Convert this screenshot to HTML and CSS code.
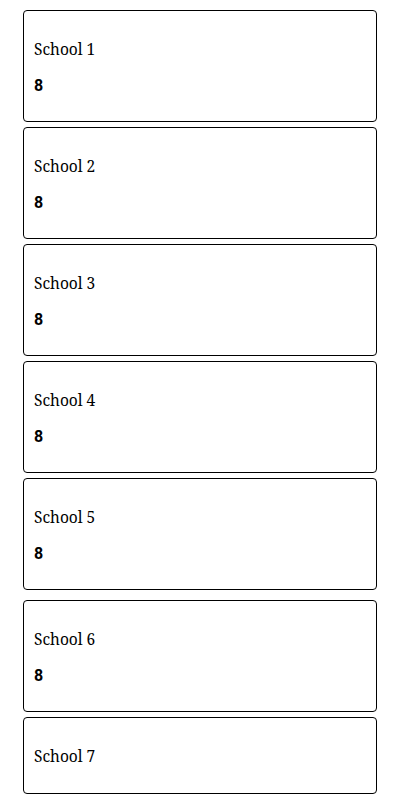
FILE: index.html
```html
<!DOCTYPE html>
<html lang="en">
<head>
<meta charset="utf-8">
<title>Schools</title>
<link rel="stylesheet" href="styles.css">
</head>
<body>
<main class="list">
  <section class="card">
    <p class="name">School 1</p>
    <p class="value">8</p>
  </section>
  <section class="card">
    <p class="name">School 2</p>
    <p class="value">8</p>
  </section>
  <section class="card">
    <p class="name">School 3</p>
    <p class="value">8</p>
  </section>
  <section class="card">
    <p class="name">School 4</p>
    <p class="value">8</p>
  </section>
  <section class="card">
    <p class="name">School 5</p>
    <p class="value">8</p>
  </section>
  <section class="card card-spaced">
    <p class="name">School 6</p>
    <p class="value">8</p>
  </section>
  <section class="card">
    <p class="name">School 7</p>
  </section>
</main>
</body>
</html>
```
FILE: styles.css
```css
html, body {
  margin: 0;
  background: #ffffff;
}

.list {
  display: flex;
  flex-direction: column;
  gap: 5px;
  padding: 10px 23px;
}

.card {
  display: flex;
  flex-direction: column;
  gap: 16px;
  padding: 27px 10px 26px;
  border: 1px solid #000000;
  border-radius: 4px;
}

.card-spaced {
  margin-top: 5px;
}

.name,
.value {
  margin: 0;
  color: #000000;
}

.name {
  font-family: "Noto Serif", "DejaVu Serif", serif;
  font-size: 15.5px;
  line-height: 22px;
}

.value {
  font-family: Roboto, "Liberation Sans", sans-serif;
  font-size: 16px;
  font-weight: 700;
  line-height: 19px;
}
```
